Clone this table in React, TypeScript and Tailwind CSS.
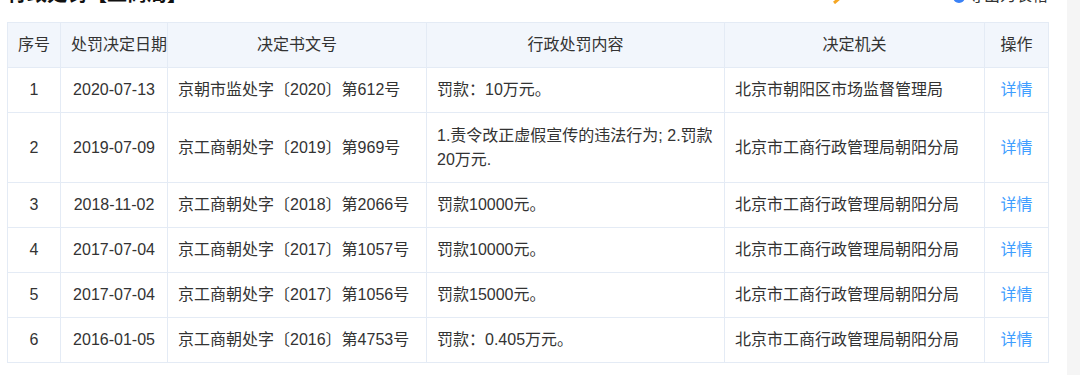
import React from 'react';

interface PenaltyRow {
  no: number;
  date: string;
  docNo: string;
  content: React.ReactNode;
  agency: string;
  tall?: boolean;
}

const rows: PenaltyRow[] = [
  { no: 1, date: '2020-07-13', docNo: '京朝市监处字〔2020〕第612号', content: '罚款：10万元。', agency: '北京市朝阳区市场监督管理局' },
  {
    no: 2,
    date: '2019-07-09',
    docNo: '京工商朝处字〔2019〕第969号',
    content: (
      <>
        <span className="whitespace-nowrap">1.责令改正虚假宣传的违法行为; 2.罚款</span>
        <br />
        20万元.
      </>
    ),
    agency: '北京市工商行政管理局朝阳分局',
    tall: true,
  },
  { no: 3, date: '2018-11-02', docNo: '京工商朝处字〔2018〕第2066号', content: '罚款10000元。', agency: '北京市工商行政管理局朝阳分局' },
  { no: 4, date: '2017-07-04', docNo: '京工商朝处字〔2017〕第1057号', content: '罚款10000元。', agency: '北京市工商行政管理局朝阳分局' },
  { no: 5, date: '2017-07-04', docNo: '京工商朝处字〔2017〕第1056号', content: '罚款15000元。', agency: '北京市工商行政管理局朝阳分局' },
  { no: 6, date: '2016-01-05', docNo: '京工商朝处字〔2016〕第4753号', content: '罚款：0.405万元。', agency: '北京市工商行政管理局朝阳分局' },
];

const cell = 'border border-[#e4ebf5] px-[10px] py-0 align-middle';

export default function App() {
  return (
    <div
      className="flex w-[1080px] h-[375px] overflow-hidden bg-white text-[#333] text-[16px]"
      style={{ fontFamily: '"Liberation Sans", "Noto Sans CJK SC", sans-serif' }}
    >
      <div className="w-[1067px] pl-[7px] pr-[19px]">
        <div className="flex items-center h-[28px] mt-[-20px]">
          <div className="text-[20px] font-bold text-[#111] leading-[28px]">行政处罚【工商局】</div>
          <span className="ml-[12px] text-[14px] text-[#f5b5b5]">2</span>
          <div className="ml-auto flex items-end h-[28px]">
            <svg width="14" height="14" viewBox="0 0 14 14" className="mr-[108px] mb-[4px]">
              <path d="M3 1 L10 7 L3 13" fill="none" stroke="#f5a623" strokeWidth="3" />
            </svg>
            <svg width="12" height="12" viewBox="0 0 12 12" className="mr-[3px] mb-[5px]">
              <circle cx="6" cy="6" r="6" fill="#3b82f6" />
            </svg>
            <span className="text-[#333] leading-[28px] mb-[-2px]">导出为表格</span>
          </div>
        </div>
        <table className="mt-[14px] w-[1041px] table-fixed border-collapse">
          <colgroup>
            <col className="w-[53px]" />
            <col className="w-[107px]" />
            <col className="w-[259px]" />
            <col className="w-[298px]" />
            <col className="w-[260px]" />
            <col className="w-[64px]" />
          </colgroup>
          <thead>
            <tr className="bg-[#f2f6fc]">
              <th className={`${cell} h-[45px] font-normal text-center whitespace-nowrap px-0`}>序号</th>
              <th className={`${cell} h-[45px] font-normal text-center whitespace-nowrap px-0`}>处罚决定日期</th>
              <th className={`${cell} h-[45px] font-normal text-center`}>决定书文号</th>
              <th className={`${cell} h-[45px] font-normal text-center`}>行政处罚内容</th>
              <th className={`${cell} h-[45px] font-normal text-center`}>决定机关</th>
              <th className={`${cell} h-[45px] font-normal text-center`}>操作</th>
            </tr>
          </thead>
          <tbody>
            {rows.map((r) => {
              const h = r.tall ? 'h-[70px]' : 'h-[45px]';
              return (
                <tr key={r.no}>
                  <td className={`${cell} ${h} text-center`}>{r.no}</td>
                  <td className={`${cell} ${h} text-center px-0`}>{r.date}</td>
                  <td className={`${cell} ${h} whitespace-nowrap`}>{r.docNo}</td>
                  <td className={`${cell} ${h} leading-[24px]`}>{r.content}</td>
                  <td className={`${cell} ${h} whitespace-nowrap`}>{r.agency}</td>
                  <td className={`${cell} ${h} text-center text-[#409eff] px-0`}>详情</td>
                </tr>
              );
            })}
          </tbody>
        </table>
      </div>
      <div className="flex-1 bg-[#f5f5f5]" />
    </div>
  );
}
